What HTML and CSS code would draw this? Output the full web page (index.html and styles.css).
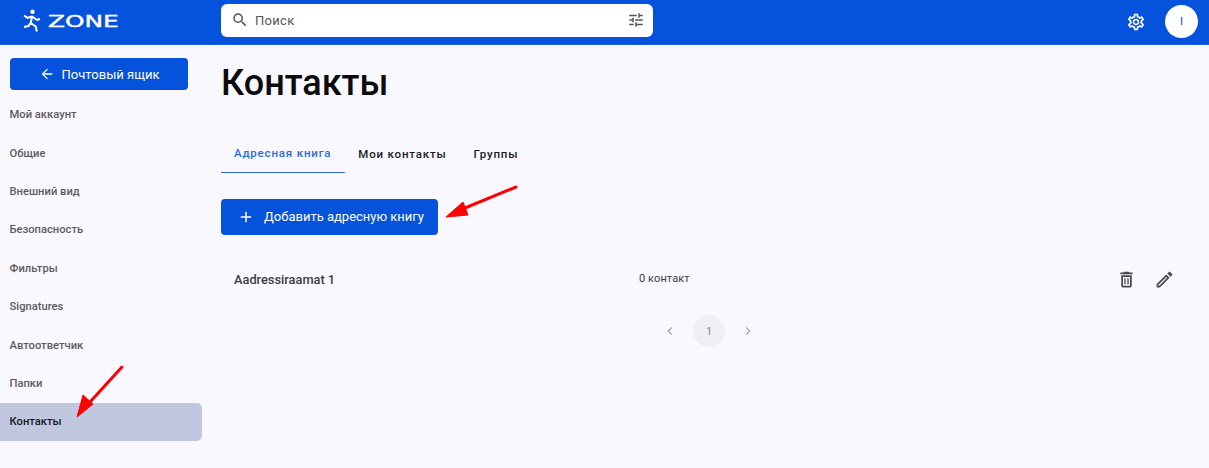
FILE: index.html
```html
<!DOCTYPE html>
<html lang="ru">
<head>
<meta charset="utf-8">
<title>Контакты</title>
<link rel="stylesheet" href="styles.css">
</head>
<body>
<header class="topbar">
  <div class="logo">
    <svg class="logo-mark" width="18" height="24" viewBox="0 0 18 24"><circle cx="9.500" cy="2.800" r="2.200" fill="#fff"/><path d="M1 6.500l3.500 2.300L9 7.500l5 3.500 3-1M9 7.500L7.800 14l5 3.500 1 5M7.500 14L5.500 17 1 18" fill="none" stroke="#fff" stroke-width="2"/></svg>
    <span class="logo-text">ZONE</span>
  </div>
  <div class="search">
    <svg class="search-icon" width="18" height="18" viewBox="0 0 24 24"><path fill="#555" d="M15.500 14h-.79l-.28-.27A6.470 6.470 0 0 0 16 9.500 6.500 6.500 0 1 0 9.500 16c1.610 0 3.090-.59 4.230-1.570l.27.28v.79l5 4.990L20.490 19l-4.990-5zm-6 0C7.010 14 5 11.990 5 9.500S7.010 5 9.500 5 14 7.010 14 9.500 11.990 14 9.500 14z"/></svg>
    <span class="search-text">Поиск</span>
    <svg class="tune-icon" width="18" height="18" viewBox="0 0 24 24"><path fill="#555" d="M3 17v2h6v-2H3zM3 5v2h10V5H3zm10 16v-2h8v-2h-8v-2h-2v6h2zM7 9v2H3v2h4v2h2V9H7zm14 4v-2H11v2h10zm-6-4h2V7h4V5h-4V3h-2v6z"/></svg>
  </div>
  <div class="top-actions">
    <svg width="20" height="20" viewBox="0 0 24 24"><path fill="#fff" d="M19.430 12.980c.04-.32.07-.64.07-.98s-.03-.66-.07-.98l2.110-1.650c.19-.15.24-.42.12-.64l-2-3.460c-.12-.22-.39-.3-.61-.22l-2.490 1c-.52-.4-1.080-.73-1.690-.98l-.38-2.650A.488.488 0 0 0 14 2h-4c-.25 0-.46.18-.49.42l-.38 2.650c-.61.25-1.170.59-1.690.98l-2.490-1c-.23-.09-.49 0-.61.22l-2 3.460c-.13.22-.07.49.12.64l2.110 1.650c-.04.32-.07.65-.07.98s.03.66.07.98l-2.110 1.650c-.19.15-.24.42-.12.64l2 3.460c.12.22.39.3.61.22l2.490-1c.52.4 1.080.73 1.690.98l.38 2.650c.03.24.24.42.49.42h4c.25 0 .46-.18.49-.42l.38-2.650c.61-.25 1.170-.59 1.690-.98l2.490 1c.23.09.49 0 .61-.22l2-3.460c.12-.22.07-.49-.12-.64l-2.110-1.650zM17.450 11.270c.04.31.05.52.05.73 0 .21-.02.43-.05.73l-.14 1.130.89.700 1.080.840-.7 1.210-1.270-.51-1.040-.42-.9.680c-.43.32-.84.560-1.250.73l-1.060.43-.16 1.130-.2 1.350h-1.400l-.19-1.350-.16-1.130-1.060-.43c-.43-.18-.83-.41-1.230-.71l-.91-.7-1.060.43-1.270.51-.7-1.210 1.080-.84.89-.7-.14-1.130C6.520 12.430 6.500 12.200 6.500 12s.02-.43.05-.73l.14-1.130-.89-.7-1.080-.84.7-1.210 1.270.51 1.040.42.9-.68c.43-.32.84-.56 1.250-.73l1.060-.43.16-1.130.2-1.350h1.390l.19 1.350.16 1.130 1.060.43c.43.18.83.41 1.230.71l.91.7 1.060-.43 1.270-.51.7 1.210-1.070.85-.89.7.14 1.130zM12 8c-2.210 0-4 1.790-4 4s1.790 4 4 4 4-1.790 4-4-1.790-4-4-4zm0 6c-1.100 0-2-.9-2-2s.9-2 2-2 2 .9 2 2-.9 2-2 2z"/></svg>
    <div class="avatar">I</div>
  </div>
</header>

<div class="layout">
  <aside class="sidebar">
    <button class="back-btn">
      <svg width="16" height="16" viewBox="0 0 24 24"><path fill="#fff" d="M20 11H7.830l5.590-5.590L12 4l-8 8 8 8 1.410-1.410L7.830 13H20v-2z"/></svg>
      <span>Почтовый ящик</span>
    </button>
    <nav class="nav">
      <a class="nav-item">Мой аккаунт</a>
      <a class="nav-item">Общие</a>
      <a class="nav-item">Внешний вид</a>
      <a class="nav-item">Безопасность</a>
      <a class="nav-item">Фильтры</a>
      <a class="nav-item">Signatures</a>
      <a class="nav-item">Автоответчик</a>
      <a class="nav-item">Папки</a>
      <a class="nav-item active">Контакты</a>
    </nav>
  </aside>

  <main class="content">
    <h1 class="title">Контакты</h1>
    <div class="tabs">
      <a class="tab active">Адресная книга</a>
      <a class="tab">Мои контакты</a>
      <a class="tab">Группы</a>
    </div>
    <button class="add-btn">
      <svg width="18" height="18" viewBox="0 0 24 24"><path fill="#fff" d="M19 13h-6v6h-2v-6H5v-2h6V5h2v6h6v2z"/></svg>
      <span>Добавить адресную книгу</span>
    </button>
    <div class="book-row">
      <span class="book-name">Aadressiraamat 1</span>
      <span class="book-count">0 контакт</span>
      <div class="book-actions">
        <svg width="21" height="21" viewBox="0 0 24 24"><path fill="#4a4a4a" d="M16 9v10H8V9h8m-1.500-6h-5l-1 1H5v2h14V4h-3.500l-1-1zM18 7H6v12c0 1.100.9 2 2 2h8c1.100 0 2-.9 2-2V7zM9.500 10.500h1.500v7H9.500zM13 10.500h1.500v7H13z"/></svg>
        <svg width="21" height="21" viewBox="0 0 24 24"><path fill="#4a4a4a" d="M14.060 9.020l.92.92L5.920 19H5v-.92l9.060-9.060M17.660 3c-.25 0-.51.1-.7.29l-1.830 1.830 3.750 3.750 1.830-1.830c.39-.39.39-1.020 0-1.410l-2.340-2.340c-.2-.2-.45-.29-.71-.29zm-3.600 3.190L3 17.250V21h3.750L17.810 9.940l-3.750-3.750z"/></svg>
      </div>
    </div>
    <div class="pager">
      <svg width="16" height="16" viewBox="0 0 24 24"><path fill="#aaa" d="M15.410 7.410 14 6l-6 6 6 6 1.410-1.410L10.830 12z"/></svg>
      <span class="page">1</span>
      <svg width="16" height="16" viewBox="0 0 24 24"><path fill="#aaa" d="M10 6 8.590 7.410 13.170 12l-4.580 4.590L10 18l6-6z"/></svg>
    </div>
  </main>
</div>

<svg class="annotations" width="1209" height="468" viewBox="0 0 1209 468">
  <g fill="#f00" stroke="#f00">
    <path d="M122 367L90 402" stroke-width="3" stroke-linecap="round" fill="none"/>
    <path d="M77 417l6-22 10 9z" stroke-width="1"/>
    <path d="M516 187L465 208" stroke-width="3" stroke-linecap="round" fill="none"/>
    <path d="M446 217l17-15 5 13z" stroke-width="1"/>
  </g>
</svg>
</body>
</html>
```
FILE: styles.css
```css
* { box-sizing: border-box; }
html, body { margin: 0; padding: 0; }
body {
  position: relative;
  width: 1209px;
  height: 468px;
  overflow: hidden;
  background: #f9f8fe;
  font-family: Roboto, "Noto Sans", sans-serif;
  color: #111;
}
.topbar {
  display: flex;
  align-items: center;
  height: 45px;
  background: #0553dc;
  border-bottom: 1px solid #1a62e0;
}
.logo {
  display: flex;
  align-items: center;
  width: 221px;
  padding-left: 23px;
  gap: 7px;
}
.logo-mark { display: block; margin-top: -3px; }
.logo-text {
  display: inline-block;
  width: 70px;
  color: #fff;
  font-family: "DejaVu Sans", sans-serif;
  font-size: 16px;
  font-weight: 400;
  line-height: 20px;
  -webkit-text-stroke: .4px #fff;
  transform: scaleX(1.55);
  transform-origin: left center;
}
.search {
  display: flex;
  align-items: center;
  width: 432px;
  height: 33px;
  margin-top: -4px;
  padding: 0 8px 0 10px;
  background: #fff;
  border-radius: 6px;
}
.search-text {
  flex: 1;
  margin-left: 6px;
  font-size: 13px;
  letter-spacing: .3px;
  color: #555;
}
.top-actions {
  display: flex;
  align-items: center;
  gap: 19px;
  margin-left: auto;
  padding-right: 12px;
  margin-top: -1px;
  transform: translateX(1px);
}
.avatar {
  display: flex;
  align-items: center;
  justify-content: center;
  width: 33px;
  height: 33px;
  border-radius: 50%;
  background: #fff;
  color: #0553dc;
  font-size: 11px;
  font-weight: 400;
}
.layout { display: flex; }
.sidebar { width: 221px; flex: none; padding-top: 13px; }
.back-btn {
  display: flex;
  align-items: center;
  justify-content: center;
  gap: 7px;
  width: 178px;
  height: 32px;
  margin-left: 10px;
  padding: 0;
  border: 0;
  border-radius: 4px;
  background: #0553dc;
  color: #fff;
  font: 400 13px Roboto, sans-serif;
}
.nav {
  display: flex;
  flex-direction: column;
  width: 202px;
  margin-top: 5.6px;
}
.nav-item {
  display: flex;
  align-items: center;
  height: 38.4px;
  padding-left: 9.5px;
  font-size: 11.2px;
  font-weight: 500;
  color: #5c5c60;
  border-radius: 0 5px 5px 0;
}
.nav-item.active { background: #c1c7e1; color: #16171c; }
.content { flex: 1; padding-right: 24px; }
.title {
  margin: 18px 0 0;
  font-size: 36px;
  line-height: 40px;
  font-weight: 500;
  color: #0c0c0e;
}
.tabs {
  display: flex;
  margin-top: 30px;
  height: 40px;
  align-items: stretch;
}
.tab {
  display: flex;
  align-items: center;
  padding: 1px 13.5px 0;
  font-size: 11.5px;
  font-weight: 500;
  letter-spacing: .82px;
  color: #1a1a1c;
}
.tab.active {
  padding-left: 13px;
  color: #2d6bdd;
  border-bottom: 1px solid #2d6bdd;
}
.add-btn {
  display: flex;
  align-items: center;
  gap: 9px;
  height: 36px;
  width: 217px;
  margin-top: 26px;
  padding: 0 0 1px 16px;
  border: 0;
  border-radius: 4px;
  background: #0553dc;
  color: #fff;
  font: 400 13px Roboto, sans-serif;
}
.book-row {
  display: flex;
  align-items: center;
  height: 40px;
  margin-top: 24px;
  padding-left: 13px;
  color: #3d3d40;
}
.book-name { width: 405px; font-size: 12.8px; font-weight: 500; }
.book-count { font-size: 11px; letter-spacing: .1px; margin-top: -2px; }
.book-actions {
  display: flex;
  gap: 17px;
  margin-left: auto;
  margin-right: 22px;
}
.pager {
  display: flex;
  align-items: center;
  justify-content: center;
  gap: 15px;
  margin: 16px 0 0 0;
  padding-left: 0;
  height: 32px;
  width: 976px;
}
.page {
  display: flex;
  align-items: center;
  justify-content: center;
  width: 32px;
  height: 32px;
  border-radius: 50%;
  background: #f0eff3;
  color: #8a8a8e;
  font-size: 11px;
}
.annotations {
  position: absolute;
  left: 0;
  top: 0;
  pointer-events: none;
}
```
